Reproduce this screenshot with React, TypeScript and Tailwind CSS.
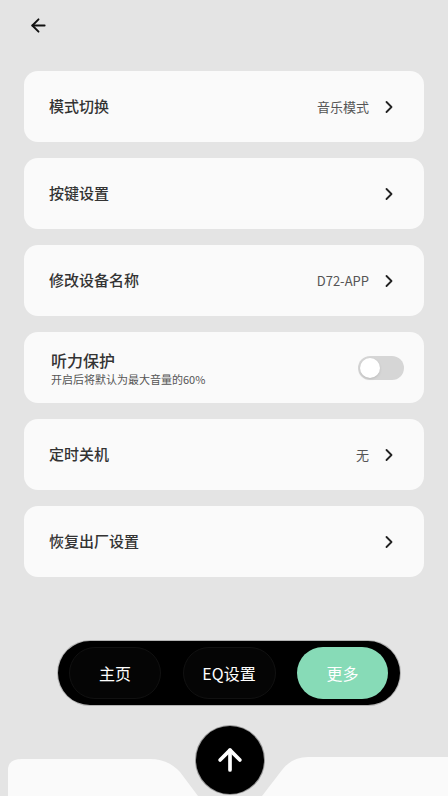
import { ArrowLeft, ArrowUp, ChevronRight } from 'lucide-react'

interface Row {
  title: string
  value?: string
}

const rows: Row[] = [
  { title: '模式切换', value: '音乐模式' },
  { title: '按键设置' },
  { title: '修改设备名称', value: 'D72-APP' },
]

const rowsAfter: Row[] = [
  { title: '定时关机', value: '无' },
  { title: '恢复出厂设置' },
]

const font = { fontFamily: '"Noto Sans CJK SC", "Noto Sans", sans-serif' }

function LinkCard({ title, value }: Row) {
  return (
    <div className="h-[71px] rounded-[14px] bg-[#fafafa] pl-[25px] pr-[25px] flex items-center justify-between">
      <span className="text-[15px] font-medium text-[#333]">{title}</span>
      <div className="flex items-center gap-[10px]">
        {value && <span className="text-[13px] text-[#555]">{value}</span>}
        <ChevronRight size={20} strokeWidth={2.2} className="text-[#222]" />
      </div>
    </div>
  )
}

export default function App() {
  return (
    <div style={font} className="relative w-[448px] h-[796px] bg-[#e4e4e4] flex flex-col overflow-hidden">
      <div className="h-[71px] pl-[28px] pt-[15px]">
        <ArrowLeft size={21} strokeWidth={2.2} className="text-[#111]" />
      </div>

      <div className="px-[24px] flex flex-col gap-[16px]">
        {rows.map((r) => (
          <LinkCard key={r.title} {...r} />
        ))}
        <div className="h-[71px] rounded-[14px] bg-[#fafafa] pl-[27px] pr-[20px] flex items-center justify-between">
          <div className="flex flex-col gap-[1px]">
            <span className="text-[16px] leading-[22px] font-medium text-[#333]">听力保护</span>
            <span className="text-[11px] leading-[15px] text-[#555]">开启后将默认为最大音量的60%</span>
          </div>
          <div className="w-[46px] h-[24px] rounded-full bg-[#d6d6d6] p-[2px] flex items-center">
            <div className="w-[20px] h-[20px] rounded-full bg-white shadow-sm" />
          </div>
        </div>
        {rowsAfter.map((r) => (
          <LinkCard key={r.title} {...r} />
        ))}
      </div>

      <div className="flex-1" />

      <div className="ml-[57px] w-[344px] h-[66px] rounded-full bg-black pl-[11px] pr-[12px] flex items-center justify-between border border-white/70">
        <div className="w-[92px] h-[52px] rounded-full bg-[#050505] border border-[#111] flex items-center justify-center text-white text-[16px]">
          主页
        </div>
        <div className="w-[93px] h-[52px] rounded-full bg-[#050505] border border-[#111] flex items-center justify-center text-white text-[16px]">
          EQ设置
        </div>
        <div className="w-[91px] h-[52px] rounded-full bg-[#87dbb7] flex items-center justify-center text-white text-[16px]">
          更多
        </div>
      </div>

      <div className="relative h-[90px]">
        <svg className="absolute left-0 bottom-0" width="448" height="40" viewBox="0 0 448 40">
          <path d="M8 40 V14 Q8 3 22 3 H150 Q168 3 180 16 L198 40 Z" fill="#fafafa" />
          <path d="M262 40 L282 14 Q292 1 308 1 H448 V40 Z" fill="#fafafa" />
        </svg>
        <div className="absolute left-[195px] top-[19px] w-[70px] h-[70px] rounded-full bg-black border border-white/60 flex items-center justify-center">
          <ArrowUp size={34} strokeWidth={2.6} className="text-white" />
        </div>
      </div>
    </div>
  )
}
